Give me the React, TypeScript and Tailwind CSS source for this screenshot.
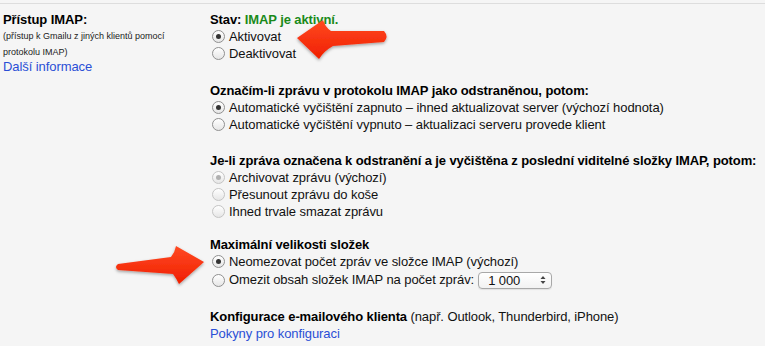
import React from "react";

function Radio({ checked, disabled }: { checked?: boolean; disabled?: boolean }) {
  return (
    <span
      className={
        "ml-[2px] mr-[4px] flex h-[13px] w-[13px] shrink-0 items-center justify-center rounded-full border bg-gradient-to-b from-white to-[#e6e6e6] " +
        (disabled ? "border-[#c4c4c4]" : "border-[#909090]")
      }
    >
      {checked && (
        <span
          className={
            "h-[5px] w-[5px] rounded-full " + (disabled ? "bg-[#b0b0b0]" : "bg-[#333]")
          }
        />
      )}
    </span>
  );
}

function Option({
  label,
  checked,
  disabled,
  children,
  className = "h-[17px]",
}: {
  label: string;
  checked?: boolean;
  disabled?: boolean;
  children?: React.ReactNode;
  className?: string;
}) {
  return (
    <div className={"flex items-center " + className}>
      <Radio checked={checked} disabled={disabled} />
      <span>{label}</span>
      {children}
    </div>
  );
}

function Heading({ children }: { children: React.ReactNode }) {
  return (
    <div className="flex h-[17px] items-center font-bold tracking-[-0.1px] text-black">
      {children}
    </div>
  );
}

function Arrows() {
  return (
    <svg
      className="pointer-events-none absolute left-0 top-0"
      width="765"
      height="346"
      viewBox="0 0 765 346"
    >
      <defs>
        <linearGradient id="red" x1="0" y1="0" x2="0" y2="1">
          <stop offset="0" stopColor="#ff4a22" />
          <stop offset="1" stopColor="#f01e00" />
        </linearGradient>
        <filter id="sh" x="-20%" y="-40%" width="140%" height="180%">
          <feDropShadow dx="0" dy="1.5" stdDeviation="1.5" floodColor="#000" floodOpacity="0.35" />
        </filter>
      </defs>
      <path
        d="M297,38 L323,20 Q325,27 331,31 L384,31 Q389,36.5 384,42 L333,46 Q324,51 319,59 Z"
        fill="url(#red)"
        filter="url(#sh)"
      />
      <path
        d="M118,264 L171,257 Q175,252 176,246 L204,262 L179,284 Q176,278 173,274 L118,270 Q114,267 118,264 Z"
        fill="url(#red)"
        filter="url(#sh)"
      />
    </svg>
  );
}

export default function App() {
  return (
    <div className="relative h-[346px] w-[765px] overflow-hidden bg-[#f5f5f5] pt-[3px] font-['Liberation_Sans',Arial,sans-serif] text-[13px] tracking-[-0.08px] text-[#111]">
      <div className="flex border-t border-[#dddddd] pt-[7px]">
        {/* left label column */}
        <div className="w-[210px] shrink-0 pl-[3px]">
          <div className="flex h-[17px] items-center font-bold text-black">Přístup IMAP:</div>
          <div className="text-[9px] leading-[16px] tracking-normal text-[#222]">
            (přístup k Gmailu z jiných klientů pomocí
            <br />
            protokolu IMAP)
          </div>
          <div className="leading-[13px] text-[#2a4fd6]">Další informace</div>
        </div>

        {/* settings column */}
        <div className="flex-1">
          <Heading>
            Stav:&nbsp;<span className="text-[#1a8a1a]">IMAP je aktivní.</span>
          </Heading>
          <Option label="Aktivovat" checked />
          <Option label="Deaktivovat" />

          <div className="mt-[20px]">
            <Heading>Označím-li zprávu v protokolu IMAP jako odstraněnou, potom:</Heading>
            <Option label="Automatické vyčištění zapnuto – ihned aktualizovat server (výchozí hodnota)" checked />
            <Option label="Automatické vyčištění vypnuto – aktualizaci serveru provede klient" />
          </div>

          <div className="mt-[19px]">
            <Heading>
              Je-li zpráva označena k odstranění a je vyčištěna z poslední viditelné složky IMAP, potom:
            </Heading>
            <Option label="Archivovat zprávu (výchozí)" checked disabled />
            <Option label="Přesunout zprávu do koše" disabled />
            <Option label="Ihned trvale smazat zprávu" disabled />
          </div>

          <div className="mt-[16px]">
            <Heading>Maximální velikosti složek</Heading>
            <Option label="Neomezovat počet zpráv ve složce IMAP (výchozí)" checked />
            <Option label="Omezit obsah složek IMAP na počet zpráv:" className="h-[20px]">
              <div className="ml-[4px] flex h-[17px] w-[74px] items-center justify-between rounded-[4px] border border-[#a8a8a8] bg-gradient-to-b from-white to-[#f2f2f2] pl-[9px] pr-[5px] shadow-[0_1px_1px_rgba(0,0,0,0.08)]">
                <span className="leading-none">1 000</span>
                <svg width="6" height="10" viewBox="0 0 6 10">
                  <path d="M3,1 L5.5,4 L0.5,4 Z" fill="#444" />
                  <path d="M3,9 L5.5,6 L0.5,6 Z" fill="#444" />
                </svg>
              </div>
            </Option>
          </div>

          <div className="mt-[18px]">
            <Heading>
              Konfigurace e-mailového klienta&nbsp;
              <span className="font-normal text-[#111]">(např. Outlook, Thunderbird, iPhone)</span>
            </Heading>
            <div className="flex h-[17px] items-center text-[#2a4fd6]">Pokyny pro konfiguraci</div>
          </div>
        </div>
      </div>
      <Arrows />
    </div>
  );
}
